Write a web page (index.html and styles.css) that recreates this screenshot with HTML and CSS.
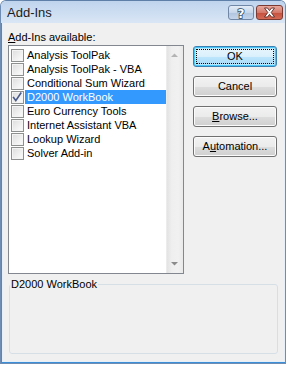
FILE: index.html
```html
<!DOCTYPE html>
<html>
<head>
<meta charset="utf-8">
<link rel="stylesheet" href="styles.css">
</head>
<body>
<div class="window">
  <div class="titlebar">
    <span class="title">Add-Ins</span>
    <div class="tb-buttons">
      <div class="tb-btn help">
        <svg width="26" height="15" viewBox="0 0 26 15"><text x="13" y="12.5" text-anchor="middle" class="help-q">?</text></svg>
      </div>
      <div class="tb-btn close">
        <svg width="27" height="15" viewBox="0 0 27 15"><path class="close-x" d="M8.5 3 H11.5 L13.5 5.6 L15.5 3 H18.5 L15.2 7.5 L18.5 12 H15.5 L13.5 9.4 L11.5 12 H8.5 L11.8 7.5 Z"/></svg>
      </div>
    </div>
  </div>
  <div class="frame">
    <div class="client">
      <div class="main">
        <div class="left">
          <div class="label"><u>A</u>dd-Ins available:</div>
          <div class="listbox">
            <ul class="items">
              <li class="item"><span class="cb"></span><span class="txt">Analysis ToolPak</span></li>
              <li class="item"><span class="cb"></span><span class="txt">Analysis ToolPak - VBA</span></li>
              <li class="item"><span class="cb"></span><span class="txt">Conditional Sum Wizard</span></li>
              <li class="item selected"><span class="cb checked"><svg width="13" height="13" viewBox="0 0 13 13"><path d="M2.5 6.5 L4.8 9.6 L9.8 2.2" class="check"/></svg></span><span class="txt">D2000 WorkBook</span></li>
              <li class="item"><span class="cb"></span><span class="txt">Euro Currency Tools</span></li>
              <li class="item"><span class="cb"></span><span class="txt">Internet Assistant VBA</span></li>
              <li class="item"><span class="cb"></span><span class="txt">Lookup Wizard</span></li>
              <li class="item"><span class="cb"></span><span class="txt">Solver Add-in</span></li>
            </ul>
            <div class="scrollbar">
              <div class="sb-arrow"><svg width="17" height="17" viewBox="0 0 17 17"><path d="M5 11 L8.5 7.5 L12 11 Z" class="arrow-up"/></svg></div>
              <div class="sb-track"></div>
              <div class="sb-arrow"><svg width="17" height="17" viewBox="0 0 17 17"><path d="M5 6 H12 L8.5 9.5 Z" class="arrow-down"/></svg></div>
            </div>
          </div>
        </div>
        <div class="buttons">
          <div class="btn default"><span class="focus">OK</span></div>
          <div class="btn">Cancel</div>
          <div class="btn"><u>B</u>rowse...</div>
          <div class="btn">A<u>u</u>tomation...</div>
        </div>
      </div>
      <fieldset class="group">
        <legend class="group-label">D2000 WorkBook</legend>
      </fieldset>
    </div>
  </div>
</div>
</body>
</html>
```
FILE: styles.css
```css
* { box-sizing: border-box; margin: 0; padding: 0; }
html, body { width: 288px; height: 366px; overflow: hidden; background: #ffffff; }
body { font-family: "Liberation Sans", Arial, sans-serif; font-size: 11px; color: #000; }

.window {
  width: 286px;
  height: 364px;
  display: flex;
  flex-direction: column;
  background: #dbe8f6;
  border: 1px solid #6f8db3;
  border-top-color: #5d7fa8;
  border-radius: 6px 6px 0 0;
  overflow: hidden;
}

.titlebar {
  height: 22px;
  flex: none;
  display: flex;
  align-items: center;
  justify-content: space-between;
  padding: 0 2px 0 6px;
  background: linear-gradient(#bfd4ed, #cfdff2 60%, #d9e6f5);
}
.title { font-size: 13px; color: #1b1b1b; padding-top: 1px; }
.tb-buttons { display: flex; gap: 2px; align-self: flex-start; margin-top: 4px; }
.tb-btn { height: 15px; border-radius: 3px; display: flex; }
.tb-btn.help { width: 26px; border: 1px solid #7187a6; background: linear-gradient(#e3ecf7, #c7d6ea 50%, #b0c4df 51%, #c4d5ea); }
.tb-btn.close { width: 27px; border: 1px solid #7a3a32; background: linear-gradient(#e8a99c, #d57a6b 50%, #c4503c 51%, #d66a55); }
.tb-btn svg { display: block; margin: -1px; }
.help-q { font-family: "DejaVu Sans", sans-serif; font-weight: bold; font-size: 12px; fill: #ffffff; stroke: #33465e; stroke-width: 1.6px; paint-order: stroke; }
.close-x { fill: #ffffff; stroke: #5a2620; stroke-width: 0.9; stroke-linejoin: round; }

.frame {
  flex: 1;
  display: flex;
  border-left: 1px solid #3b8fd9;
  border-right: 1px solid #3b8fd9;
  border-bottom: 1px solid #3b8fd9;
}
.client {
  flex: 1;
  background: #f0f0f0;
  border: 1px solid #e6eef7;
  border-top: none;
  padding: 7px 6px 0 5px;
  display: flex;
  flex-direction: column;
}

.main { display: flex; }
.left { width: 176px; display: flex; flex-direction: column; }
.label { height: 15px; line-height: 13px; padding-top: 1px; }

.listbox {
  height: 229px;
  border: 1px solid #828790;
  background: #ffffff;
  display: flex;
}
.items { flex: 1; list-style: none; padding-top: 2px; }
.item { height: 14px; display: flex; align-items: center; padding-left: 2px; }
.cb {
  width: 13px; height: 13px; flex: none;
  border: 1px solid #8e8f8f;
  background: linear-gradient(135deg, #dcdcdc, #f4f4f4 70%, #fbfbfb);
  box-shadow: inset 0 0 0 1px #f4f4f4;
}
.cb svg { display: block; margin: -1px; }
.check { fill: none; stroke: #4a5b89; stroke-width: 1.6; stroke-linecap: square; }
.txt { margin-left: 1px; padding: 0 2px; line-height: 14px; height: 14px; white-space: nowrap; }
.item.selected .txt { flex: 1; background: #3399ff; color: #ffffff; }

.scrollbar {
  width: 17px; flex: none;
  display: flex; flex-direction: column;
  background: linear-gradient(90deg, #e3e3e3, #efefef 30%, #f1f1f1 70%, #e9e9e9);
  border-left: 1px solid #ececec;
}
.sb-arrow { height: 17px; flex: none; }
.sb-arrow svg { display: block; margin-left: -1px; }
.sb-track { flex: 1; }
.arrow-up { fill: #b4b4b4; }
.arrow-down { fill: #8c8c8c; }

.buttons {
  margin-left: 9px;
  padding-top: 16px;
  display: flex;
  flex-direction: column;
  gap: 9px;
}
.btn {
  width: 84px; height: 21px;
  border: 1px solid #707070;
  border-radius: 3px;
  background: linear-gradient(#f2f2f2, #ebebeb 50%, #dddddd 51%, #cfcfcf);
  box-shadow: inset 0 0 0 1px #fbfbfb;
  display: flex; align-items: center; justify-content: center;
  line-height: 13px;
}
.btn.default {
  border-color: #3c7fb1;
  box-shadow: inset 0 0 0 1px #48c6f7, inset 0 0 0 2px #b6e7fb;
  background: linear-gradient(#eaf6fd, #d9f0fc 50%, #bee6fd 51%, #a7d9f5);
  padding: 2px;
}
.focus {
  flex: 1; align-self: stretch;
  display: flex; align-items: center; justify-content: center;
  border: 1px dotted #000;
}

.group {
  margin: 4px 0 0 1px;
  width: 269px;
  height: 76px;
  border: 1px solid #d5dfe5;
  border-radius: 3px;
  padding: 0;
}
.group-label { padding: 0 1px; line-height: 13px; margin-left: 0; }
```
